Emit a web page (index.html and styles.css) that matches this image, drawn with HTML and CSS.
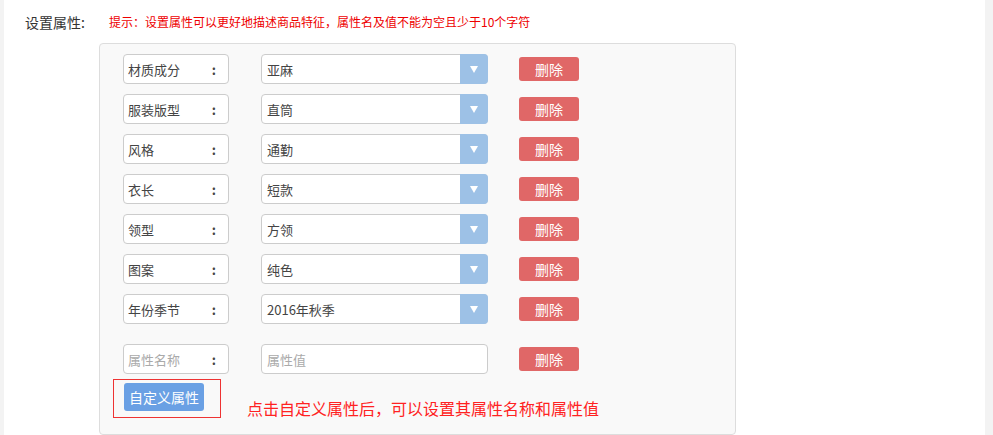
FILE: index.html
```html
<!DOCTYPE html>
<html lang="zh-CN">
<head>
    <meta charset="UTF-8">
    <title>设置属性</title>
    <link rel="stylesheet" href="styles.css">
</head>
<body>
    <div class="page">
        <div class="form-row">
            <label class="form-label">设置属性:</label>
            <div class="form-body">
                <p class="hint">提示：设置属性可以更好地描述商品特征，属性名及值不能为空且少于10个字符</p>
                <div class="attr-panel">
                    <div class="attr-row">
                        <div class="attr-name"><span>材质成分</span><span class="colon">:</span></div>
                        <div class="attr-value"><span>亚麻</span><span class="arrow"></span></div>
                        <button class="btn-del">删除</button>
                    </div>
                    <div class="attr-row">
                        <div class="attr-name"><span>服装版型</span><span class="colon">:</span></div>
                        <div class="attr-value"><span>直筒</span><span class="arrow"></span></div>
                        <button class="btn-del">删除</button>
                    </div>
                    <div class="attr-row">
                        <div class="attr-name"><span>风格</span><span class="colon">:</span></div>
                        <div class="attr-value"><span>通勤</span><span class="arrow"></span></div>
                        <button class="btn-del">删除</button>
                    </div>
                    <div class="attr-row">
                        <div class="attr-name"><span>衣长</span><span class="colon">:</span></div>
                        <div class="attr-value"><span>短款</span><span class="arrow"></span></div>
                        <button class="btn-del">删除</button>
                    </div>
                    <div class="attr-row">
                        <div class="attr-name"><span>领型</span><span class="colon">:</span></div>
                        <div class="attr-value"><span>方领</span><span class="arrow"></span></div>
                        <button class="btn-del">删除</button>
                    </div>
                    <div class="attr-row">
                        <div class="attr-name"><span>图案</span><span class="colon">:</span></div>
                        <div class="attr-value"><span>纯色</span><span class="arrow"></span></div>
                        <button class="btn-del">删除</button>
                    </div>
                    <div class="attr-row">
                        <div class="attr-name"><span>年份季节</span><span class="colon">:</span></div>
                        <div class="attr-value"><span>2016年秋季</span><span class="arrow"></span></div>
                        <button class="btn-del">删除</button>
                    </div>

                    <div class="attr-row custom">
                        <div class="attr-name placeholder"><span>属性名称</span><span class="colon">:</span></div>
                        <div class="attr-value placeholder"><span>属性值</span></div>
                        <button class="btn-del">删除</button>
                    </div>

                    <div class="custom-row">
                        <div class="mark-box">
                            <button class="btn-custom">自定义属性</button>
                        </div>
                        <span class="note">点击自定义属性后，可以设置其属性名称和属性值</span>
                    </div>
                </div>
            </div>
        </div>
    </div>
</body>
</html>
```

FILE: styles.css
```css
body {
    margin: 0;
    background-color: #f3f3f3;
    font-family: "Noto Sans CJK SC", "Noto Sans", sans-serif;
    color: #333;
}
.page {
    margin: 0 8px 0 4px;
    height: 435px;
    background: #fff;
    overflow: hidden;
}
.form-row {
    display: flex;
    padding-top: 11px;
}
.form-label {
    width: 84px;
    padding-left: 21px;
    font-size: 14px;
    line-height: 22px;
    color: #333;
}
.form-body {
    margin-left: -10px;
}
.hint {
    margin: 1px 0 11px 10px;
    font-size: 12px;
    line-height: 20px;
    color: #e00;
}
.attr-panel {
    width: 612px;
    height: 380px;
    padding: 10px 0 0 23px;
    background: #f9f9f9;
    border: 1px solid #ddd;
    border-radius: 4px;
}
.attr-row {
    display: flex;
    align-items: center;
    height: 30px;
    margin-bottom: 10px;
}
.attr-row.custom {
    margin-top: 20px;
    margin-bottom: 5px;
}
.attr-name {
    box-sizing: border-box;
    width: 106px;
    height: 30px;
    display: flex;
    align-items: center;
    justify-content: space-between;
    padding: 0 12px 0 4px;
    background: #fff;
    border: 1px solid #ccc;
    border-radius: 4px;
    font-size: 13px;
    color: #444;
}
.colon {
    font-weight: bold;
}
.attr-value {
    box-sizing: border-box;
    width: 227px;
    height: 30px;
    margin-left: 32px;
    display: flex;
    align-items: center;
    justify-content: space-between;
    padding-left: 5px;
    background: #fff;
    border: 1px solid #ccc;
    border-radius: 4px;
    font-size: 13px;
    color: #444;
}
.placeholder span:first-child {
    color: #aaa;
}
.arrow {
    width: 28px;
    height: 30px;
    margin-right: -1px;
    background: #9dc1e6;
    border-radius: 0 4px 4px 0;
    display: flex;
    align-items: center;
    justify-content: center;
}
.arrow::after {
    content: "";
    border-left: 4px solid transparent;
    border-right: 4px solid transparent;
    border-top: 7px solid #fff;
}
.btn-del {
    width: 60px;
    height: 24px;
    margin-left: 31px;
    padding: 0;
    border: none;
    border-radius: 3px;
    background-color: #e06767;
    color: #fff;
    font-family: inherit;
    font-size: 14px;
}
.custom-row {
    display: flex;
    align-items: flex-start;
    margin-left: -10px;
}
.mark-box {
    width: 96px;
    height: 28px;
    padding: 3px 0 6px 10px;
    border: 1px solid #e33;
}
.btn-custom {
    width: 80px;
    height: 28px;
    padding: 0;
    border: none;
    border-radius: 3px;
    background-color: #6aa0e4;
    color: #fff;
    font-family: inherit;
    font-size: 14px;
}
.note {
    margin: 18px 0 0 26px;
    font-size: 16px;
    line-height: 22px;
    color: #f22;
}
```
